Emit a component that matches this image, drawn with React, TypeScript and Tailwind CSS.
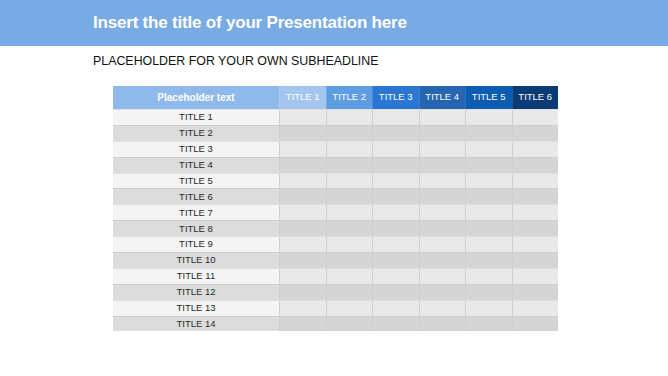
import React from "react";

const headers = [
  { label: "TITLE 1", bg: "bg-[#a3c5ee]" },
  { label: "TITLE 2", bg: "bg-[#5e9de2]" },
  { label: "TITLE 3", bg: "bg-[#2a76d2]" },
  { label: "TITLE 4", bg: "bg-[#2765b3]" },
  { label: "TITLE 5", bg: "bg-[#0c5cb2]" },
  { label: "TITLE 6", bg: "bg-[#093c74]" },
];

const rows = Array.from({ length: 14 }, (_, i) => `TITLE ${i + 1}`);

export default function App() {
  return (
    <div className="w-[668px] h-[376px] bg-white overflow-hidden font-['Liberation_Sans',Arial,sans-serif]">
      <div className="h-[46px] bg-[#78aae4] flex items-center pl-[93px]">
        <h1 className="text-white font-bold text-[17px] tracking-[-0.2px]">Insert the title of your Presentation here</h1>
      </div>
      <div className="pl-[93px] pt-[8px] text-[12.4px] text-[#111] leading-[14px]">PLACEHOLDER FOR YOUR OWN SUBHEADLINE</div>

      <div className="ml-[113px] mt-[18px] w-[445px]">
        <div className="flex h-[23px] text-white">
          <div className="w-[166px] bg-[#8fb9ea] flex items-center justify-center font-bold text-[10px]">Placeholder text</div>
          {headers.map((h) => (
            <div key={h.label} className={`flex-1 ${h.bg} flex items-center justify-center text-[9.5px] border-l border-[#ffffff22]`}>
              {h.label}
            </div>
          ))}
        </div>
        {rows.map((r, i) => {
          const even = i % 2 === 1;
          return (
            <div key={r} className={`flex h-[15.9px] border-t ${even ? "border-[#cdcdcd]" : "border-[#e0e0e0]"}`}>
              <div className={`w-[166px] flex items-center justify-center text-[9.5px] text-[#2a2a2a] ${even ? "bg-[#dcdcdc]" : "bg-[#f4f4f4]"}`}>
                {r}
              </div>
              {headers.map((h) => (
                <div key={h.label} className={`flex-1 border-l border-[#cfcfcf] ${even ? "bg-[#d5d5d5]" : "bg-[#e9e9e9]"}`} />
              ))}
            </div>
          );
        })}
      </div>
    </div>
  );
}
